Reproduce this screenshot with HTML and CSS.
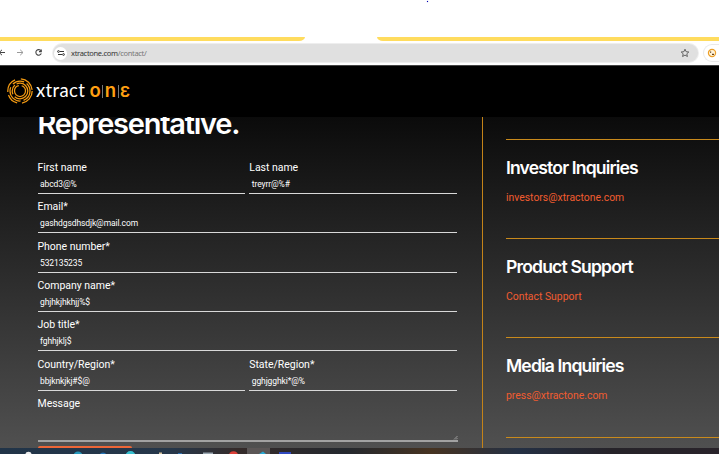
FILE: index.html
```html
<!DOCTYPE html>
<html lang="en">
<head>
<meta charset="utf-8">
<title>Contact</title>
<link rel="stylesheet" href="styles.css">
</head>
<body>
<div class="tabs"><span class="dot"></span><div class="strip strip-left"></div><div class="strip strip-right"></div></div>
<nav class="toolbar">
  <svg class="nav-icons" width="50" height="24" viewBox="0 0 50 24" fill="none" stroke="#444" stroke-width="1">
    <path d="M5 11.5H-1M2 8.8L-.8 11.5L2 14.2"/>
    <path stroke="#999" d="M17 11.5h6M20.2 8.8l2.8 2.7l-2.8 2.7"/>
    <path stroke-width="1.1" d="M41 9.8A2.8 2.8 0 1 0 41.3 12.4M41.3 8.4v2.2h-2.3"/>
  </svg>
  <div class="address">
    <span class="site"><svg width="12" height="12" viewBox="0 0 12 12" fill="none" stroke="#333"><path d="M5 4.500h4M3 7.500h4"/><circle cx="3.500" cy="4.500" r=".9"/><circle cx="8.500" cy="7.500" r=".9"/></svg></span>
    <span class="url">xtractone.com<i>/contact/</i></span>
    <svg class="star" width="10" height="10" viewBox="0 0 10 10" fill="none" stroke="#555" stroke-width=".9"><path d="M5 1.2l1.1 2.5 2.7.3-2 1.8.6 2.7L5 7.1 2.6 8.5l.6-2.7-2-1.8 2.7-.3z"/></svg>
  </div>
  <div class="ext"><svg width="10" height="10" viewBox="0 0 10 10"><circle cx="5" cy="5" r="3.6" fill="#fff3d8" stroke="#eda029" stroke-width="1.2"/><path d="M3 4.2h1.2M5 6.3h2" stroke="#65401c" stroke-width="1.3"/></svg></div>
</nav>
<header class="header">
  <svg width="28" height="28" viewBox="0 0 28 28" fill="none" stroke="#f39a12" stroke-width="1.25">
    <circle cx="14" cy="14" r="12.2" stroke-dasharray="17 5 12 3 15 6"/>
    <circle cx="14" cy="14" r="10" stroke-dasharray="12 3 20 4"/>
    <circle cx="14" cy="14" r="7.8" stroke-dasharray="18 3 10 2"/>
    <circle cx="14" cy="14" r="5.5" stroke-dasharray="24 3"/>
  </svg>
  <span class="brand">xtract</span>
  <span class="one"><b>o</b><i></i><b>n</b><i></i><b>ɛ</b></span>
</header>
<main class="content">
  <section class="form">
    <h1>Representative.</h1>
    <div class="row"><label class="field">First name<span>abcd3@%</span></label><label class="field">Last name<span>treyrr@%#</span></label></div>
    <div class="row"><label class="field">Email*<span>gashdgsdhsdjk@mail.com</span></label></div>
    <div class="row"><label class="field">Phone number*<span>532135235</span></label></div>
    <div class="row"><label class="field">Company name*<span>ghjhkjhkhjj%$</span></label></div>
    <div class="row"><label class="field">Job title*<span>fghhjklj$</span></label></div>
    <div class="row"><label class="field">Country/Region*<span>bbjknkjkj#$@</span></label><label class="field">State/Region*<span>gghjgghki*@%</span></label></div>
    <div class="row message"><label class="field">Message<svg width="5" height="5" viewBox="0 0 5 5" stroke="#bbb" stroke-width=".7"><path d="M1 4.5L4.5 1M3 4.5L4.5 3"/></svg></label></div>
    <div class="submit"></div>
  </section>
  <aside class="side">
    <section><h2>Investor Inquiries</h2><a>investors@xtractone.com</a></section>
    <section><h2>Product Support</h2><a>Contact Support</a></section>
    <section><h2>Media Inquiries</h2><a>press@xtractone.com</a></section>
    <section></section>
  </aside>
</main>
<footer class="taskbar">
  <svg width="719" height="6" viewBox="0 0 719 6">
    <path fill="#5b5656" d="M247 0h23v6h-23z"/>
    <circle cx="28.5" cy="7" r="3.2" fill="#eee"/><circle cx="78" cy="8" r="4.5" fill="#2699bd"/><circle cx="103" cy="8" r="3.5" fill="#2473b5"/><circle cx="130.500" cy="8" r="5" fill="#36bfd0"/>
    <path fill="#d7c4a0" d="M159 4.500h3v2h-3z"/><path fill="#2d6fae" d="M178 5h4v1h-4z"/><path fill="#9aa7b1" d="M203 4.500h10v2h-10z"/><circle cx="233.500" cy="8" r="4.800" fill="#dc3f38"/><path fill="#28a9d4" d="M259 6l4-2.500 3 2.500z"/><path fill="#3049c0" d="M279 4h12v2h-12z"/>
  </svg>
</footer>
</body>
</html>
```
FILE: styles.css
```css
* { box-sizing: border-box; }
body { margin: 0; width: 719px; height: 454px; overflow: hidden; background: #fff; font-family: Roboto, sans-serif; display: flex; flex-direction: column; }
svg { display: block; flex: none; }
.tabs { height: 41px; flex: none; display: flex; align-items: flex-end; justify-content: space-between; position: relative; }
.dot { position: absolute; left: 427px; top: 1px; width: 1px; height: 1px; background: #0000b0; box-shadow: 0 0 1px #22c; }
.strip { height: 4px; background: #ffdc5e; }
.strip-left { width: 305px; border-radius: 0 0 6px 0 / 0 0 4px 0; }
.strip-right { width: 342px; border-radius: 0 0 0 6px / 0 0 0 4px; }
.toolbar { height: 25px; flex: none; display: flex; align-items: center; gap: 3px; border-bottom: 1px solid #444; }
.address { width: 645px; height: 18px; border-radius: 9px; background: #e0e0e0; display: flex; align-items: center; padding: 0 7px 0 1px; box-shadow: 0 0 0 1px #eee; flex: none; }
.site { width: 13px; height: 13px; border-radius: 50%; background: #fff; display: grid; place-items: center; }
.url { flex: 1; margin-left: 4px; font: 7.500px/12px "Noto Sans", sans-serif; letter-spacing: -.31px; color: #333; }
.url i { font-style: normal; color: #777; }
.star { margin-right: 1px; }
.ext { flex: 1; height: 18px; margin-left: 2px; border: 1px solid #e9e9e9; border-right: 0; border-radius: 9px 0 0 9px; display: flex; align-items: center; padding-left: 3px; }
.ext svg { margin-right: -4px; }
.header { height: 51px; flex: none; background: #000; display: flex; align-items: center; padding-left: 6px; }
.header > svg { margin-top: -2px; }
.brand { width: 53.500px; margin: -4px 0 0 2px; color: #fff; font: 18.500px/24px Lato, sans-serif; letter-spacing: .35px; }
.one { display: flex; align-items: center; gap: 1.500px; margin-top: -3px; color: #ffa012; font: 18.500px/22px Inter, sans-serif; }
.one b { font-weight: 600; }
.one i { width: 1px; height: 13px; margin-top: 2px; background: #777; }
.content { height: 331px; flex: none; display: flex; overflow: hidden; background: linear-gradient(#0b0b0b, #505050); color: #fff; }
.form { width: 483px; padding: 0 25px 0 37.500px; border-right: 1px solid #c48318; flex: none; }
h1, h2 { margin: 0; font-family: Inter, sans-serif; font-weight: 600; white-space: nowrap; }
h1 { height: 43px; font-size: 29px; line-height: 40px; letter-spacing: -1.250px; margin-top: -13px; margin-bottom: 13.200px; }
.row { display: flex; gap: 4px; height: 39.300px; }
.field { flex: 1; height: 34px; border-bottom: 1px solid #d8d8d8; font-size: 10.500px; line-height: 16px; letter-spacing: -.03px; }
.field span { display: block; padding-left: 2.500px; font-size: 8.500px; line-height: 16.600px; letter-spacing: -.1px; }
.message { height: 42px; }
.message .field { height: 46px; flex: none; width: 420px; border-bottom: 2px solid #a2a2a2; display: flex; justify-content: space-between; }
.message svg { align-self: flex-end; }
.submit { width: 94px; height: 12px; margin-top: 8.500px; border-radius: 2px; background: #ed6637; }
.side { flex: 1; padding: 22px 0 0 23px; }
.side section { height: 99.200px; border-top: 1px solid #c98a1c; padding-top: 14.600px; }
h2 { font-size: 17.600px; line-height: 26px; letter-spacing: -.86px; }
.side a { display: block; margin-top: 9px; color: #f15c30; font-size: 10.400px; line-height: 16px; }
.taskbar { height: 6px; flex: none; background: linear-gradient(90deg, #213448, #26374a 24%, #352b2a 33%, #24282e 48%, #463321 60%, #243044 72%, #262329 85%, #29232a); }
```
